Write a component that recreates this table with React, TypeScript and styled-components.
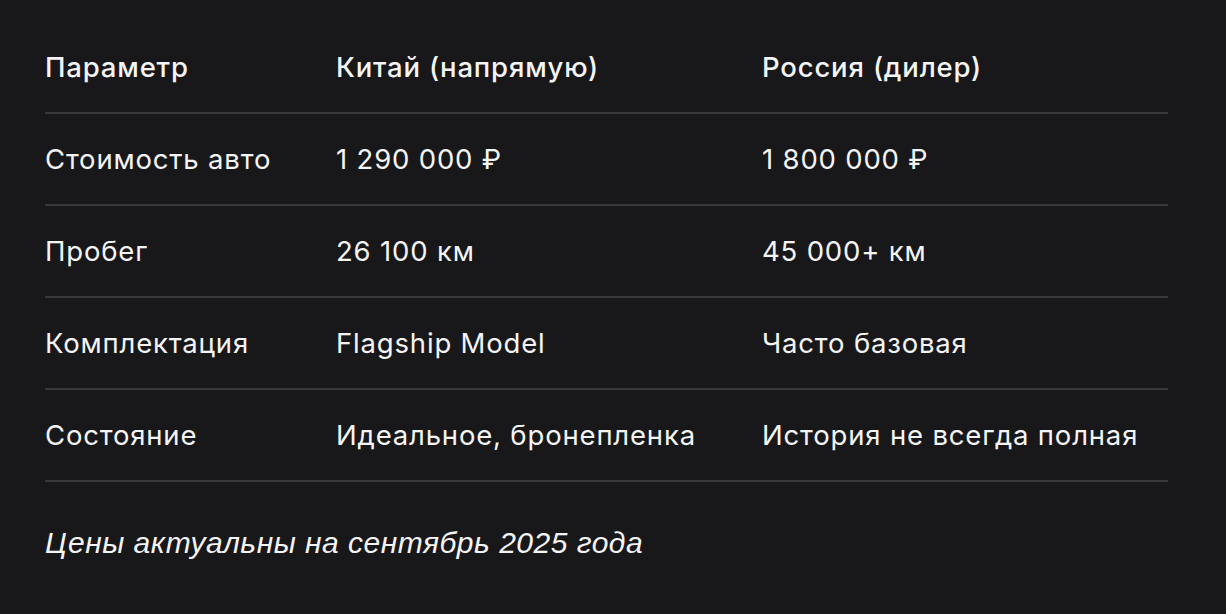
import React from "react";
import styled, { createGlobalStyle } from "styled-components";

const rows: string[][] = [
  ["Стоимость авто", "1 290 000 ₽", "1 800 000 ₽"],
  ["Пробег", "26 100 км", "45 000+ км"],
  ["Комплектация", "Flagship Model", "Часто базовая"],
  ["Состояние", "Идеальное, бронепленка", "История не всегда полная"],
];

const GlobalStyle = createGlobalStyle`
  html, body {
    margin: 0;
    padding: 0;
    background: #18181a;
  }
  body {
    font-family: Inter, "Noto Sans", sans-serif;
    color: #f4f4f5;
  }
`;

export default function App() {
  return (
    <>
      <GlobalStyle />
      <StyledPage>
        <StyledTable>
          <StyledRow>
            <StyledHeadCell>Параметр</StyledHeadCell>
            <StyledHeadCell>Китай (напрямую)</StyledHeadCell>
            <StyledHeadCell>Россия (дилер)</StyledHeadCell>
          </StyledRow>
          {rows.map((row, index) => (
            <StyledRow key={index}>
              {row.map((cell, i) => (
                <StyledCell key={i}>{cell}</StyledCell>
              ))}
            </StyledRow>
          ))}
        </StyledTable>
        <StyledNote>Цены актуальны на сентябрь 2025 года</StyledNote>
      </StyledPage>
    </>
  );
}

const StyledPage = styled.div`
  width: 1226px;
  height: 614px;
  box-sizing: border-box;
  padding: 22px 58px 0 45px;
`;

const StyledTable = styled.div`
  display: flex;
  flex-direction: column;
`;

const StyledRow = styled.div`
  display: grid;
  grid-template-columns: 291px 426px 1fr;
  height: 90px;
  align-items: center;
  border-bottom: 2px solid #38383b;
`;

const StyledCell = styled.div`
  font-size: 27.5px;
  font-weight: 400;
  letter-spacing: 0.82px;
  white-space: nowrap;
`;

const StyledHeadCell = styled(StyledCell)`
  font-weight: 500;
`;

const StyledNote = styled.p`
  margin: 44px 0 0;
  font-family: "Liberation Sans", Arial, sans-serif;
  font-size: 30px;
  font-style: italic;
  letter-spacing: 0.5px;
`;
